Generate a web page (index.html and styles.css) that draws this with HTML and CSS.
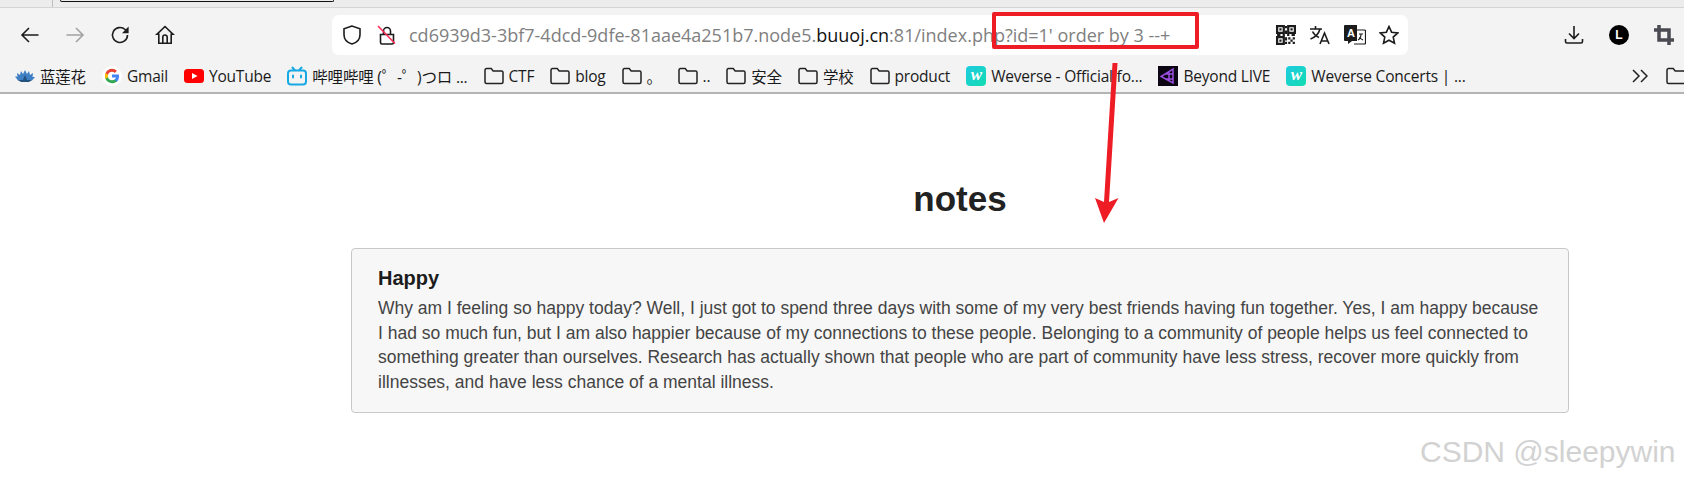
FILE: index.html
```html
<!DOCTYPE html>
<html lang="en">
<head>
    <meta charset="UTF-8">
    <meta name="viewport" content="width=device-width, initial-scale=1.0">
    <title>notes</title>
    <link rel="stylesheet" href="styles.css">
</head>
<body>
    <div class="tabstrip">
        <div class="tab-gap"></div>
        <div class="tab"></div>
    </div>

    <div class="toolbar">
        <div class="nav">
            <svg class="ic" viewBox="0 0 20 20"><path d="M18.500 10H2M9 3l-7 7 7 7"/></svg>
            <svg class="ic faded" viewBox="0 0 20 20"><path d="M1.500 10H18M11 3l7 7-7 7"/></svg>
            <svg class="ic" viewBox="0 0 20 20"><path d="M17.500 10a7.500 7.500 0 1 1-2.400-5.500L17.500 7"/><path class="solid" d="M18.600 1.600v6.600h-6.600z"/></svg>
            <svg class="ic" viewBox="0 0 20 20"><path d="M10 1.500 1.800 9.300h2v8.900h12.400V9.300h2zM7.800 18.200v-6a2.200 2.200 0 0 1 4.400 0v6"/></svg>
        </div>
        <div class="address">
            <svg class="ic" viewBox="0 0 20 20"><path d="M10 1 2 3.700v6c0 4.500 3.400 7.900 8 9.300 4.600-1.400 8-4.800 8-9.300v-6z"/></svg>
            <svg class="ic lock" viewBox="0 0 20 20"><path d="M6.500 9V6a3.500 3.500 0 0 1 7 0v3M3.500 9.500h13v8a1.500 1.500 0 0 1-1.500 1.500H5a1.500 1.500 0 0 1-1.500-1.500z"/><path class="slash" d="M1 1l17 17.500"/></svg>
            <div class="url">cd6939d3-3bf7-4dcd-9dfe-81aae4a251b7.node5.<b>buuoj.cn</b>:81/index.php?id=1' order by 3 --+</div>
            <div class="addr-tools">
                <svg class="ic qr" viewBox="0 0 18 18"><path d="M1 1h6v6H1zM11 1h6v6h-6zM1 11h6v6H1z"/><path class="solid" d="M3 3h2v2H3zM13 3h2v2h-2zM3 13h2v2H3zM8 1h2v2H8zM8 5h2v3H8zM1 8h3v2H1zM6 8h2v2H6zM10 8h2v2h-2zM14 8h3v2h-3zM8 11h2v3H8zM11 11h2v2h-2zM15 11h2v2h-2zM11 15h2v2h-2zM15 15h2v2h-2zM13 13h2v2h-2zM8 15h2v2H8z"/></svg>
                <svg class="ic wide" viewBox="0 0 22 20"><path d="M1 4h12M6.500 1v3M11 4C9.800 8.500 6.500 12 1.500 14M3.500 6.500C5 9.500 7.500 11.500 10 12.500M11 19l4.500-11L20 19M12.500 16h6"/></svg>
                <svg class="ic wide" viewBox="0 0 22 20"><path class="dark" d="M0 1a1 1 0 0 1 1-1h12v16H8l-4 3v-3H1a1 1 0 0 1-1-1z"/><path class="thin" d="M13 5h7.500a1 1 0 0 1 1 1v12a1 1 0 0 1-1 1H10M15 9h4M17 9c0 3-1 5-3 6M15.500 12c.8 1.500 2 2.500 3.500 3"/><text class="glyph-a" x="3" y="12">A</text></svg>
                <svg class="ic" viewBox="0 0 20 20"><path d="M10 1.500l2.600 5.700 6.200.7-4.600 4.200 1.300 6.100L10 15.200l-5.500 3 1.300-6.100L1.200 7.900l6.200-.7z"/></svg>
            </div>
        </div>
        <div class="right-tools">
            <svg class="ic" viewBox="0 0 20 20"><path d="M10 1v12M5 8.500l5 5 5-5M1.500 14v2.500a1.500 1.500 0 0 0 1.500 1.500h14a1.500 1.500 0 0 0 1.500-1.500V14"/></svg>
            <div class="avatar">L</div>
            <svg class="ic crop" viewBox="0 0 20 20"><path d="M5 0v15h15M0 5h15v15"/></svg>
        </div>
    </div>

    <div class="bookmarks">
        <div class="bm">
            <svg class="fav" viewBox="0 0 20 20"><path class="lotus" d="M10 4l2 4 2-3 1 4 3-2-.5 4 2.500 0-3 3.500H3L0 10.500h2.500L2 7l3 2 1-4 2 3z"/><path class="lotus-dark" d="M3 14h14l-3 2H6zM10 9l2 5H8z"/></svg>
            <span>蓝莲花</span>
        </div>
        <div class="bm">
            <svg class="fav" viewBox="0 0 20 20"><circle class="fav-bg" cx="10" cy="10" r="10"/><path fill="#4285f4" d="M17 10.200c0-.6-.1-1.100-.2-1.600H10v3h3.900c-.2.900-.7 1.700-1.500 2.200v1.900h2.400c1.400-1.300 2.200-3.200 2.200-5.500z"/><path fill="#34a853" d="M10 17.200c2 0 3.600-.7 4.800-1.800l-2.400-1.900c-.6.400-1.400.7-2.400.7-1.900 0-3.500-1.300-4-3H3.500v1.900c1.200 2.400 3.700 4.100 6.500 4.100z"/><path fill="#fbbc05" d="M6 11.200c-.3-.8-.3-1.600 0-2.400V6.900H3.500c-.8 1.600-.8 4.600 0 6.200z"/><path fill="#ea4335" d="M10 5.800c1.100 0 2 .4 2.800 1.100l2.100-2.100C13.600 3.600 12 2.800 10 2.800c-2.800 0-5.300 1.700-6.500 4.100L6 8.800c.5-1.700 2.100-3 4-3z"/></svg>
            <span>Gmail</span>
        </div>
        <div class="bm">
            <svg class="fav" viewBox="0 0 20 20"><rect y="3" width="20" height="14" rx="3.500" fill="#f00"/><path fill="#fff" d="M8 7l5.500 3L8 13z"/></svg>
            <span>YouTube</span>
        </div>
        <div class="bm">
            <svg class="fav bili" viewBox="0 0 20 20"><path d="M5 1l3 3.500M15 1l-3 3.500"/><rect x="1" y="4.500" width="18" height="14" rx="3"/><path class="bili-eye" d="M6 9.500v2M14 9.500v2"/></svg>
            <span>哔哩哔哩 (゜-゜)つロ ...</span>
        </div>
        <div class="bm"><svg class="folder" viewBox="0 0 20 18"><path d="M1 3a1.500 1.500 0 0 1 1.500-1.500h4.700l2 2.500h8.300A1.500 1.500 0 0 1 19 5.500V15a1.500 1.500 0 0 1-1.500 1.500h-15A1.500 1.500 0 0 1 1 15z"/></svg><span>CTF</span></div>
        <div class="bm"><svg class="folder" viewBox="0 0 20 18"><path d="M1 3a1.500 1.500 0 0 1 1.500-1.500h4.700l2 2.500h8.300A1.500 1.500 0 0 1 19 5.500V15a1.500 1.500 0 0 1-1.500 1.500h-15A1.500 1.500 0 0 1 1 15z"/></svg><span>blog</span></div>
        <div class="bm"><svg class="folder" viewBox="0 0 20 18"><path d="M1 3a1.500 1.500 0 0 1 1.500-1.500h4.700l2 2.500h8.300A1.500 1.500 0 0 1 19 5.500V15a1.500 1.500 0 0 1-1.500 1.500h-15A1.500 1.500 0 0 1 1 15z"/></svg><span class="dot-name">。</span></div>
        <div class="bm"><svg class="folder" viewBox="0 0 20 18"><path d="M1 3a1.500 1.500 0 0 1 1.500-1.500h4.700l2 2.500h8.300A1.500 1.500 0 0 1 19 5.500V15a1.500 1.500 0 0 1-1.500 1.500h-15A1.500 1.500 0 0 1 1 15z"/></svg><span>..</span></div>
        <div class="bm"><svg class="folder" viewBox="0 0 20 18"><path d="M1 3a1.500 1.500 0 0 1 1.500-1.500h4.700l2 2.500h8.300A1.500 1.500 0 0 1 19 5.500V15a1.500 1.500 0 0 1-1.500 1.500h-15A1.500 1.500 0 0 1 1 15z"/></svg><span>安全</span></div>
        <div class="bm"><svg class="folder" viewBox="0 0 20 18"><path d="M1 3a1.500 1.500 0 0 1 1.500-1.500h4.700l2 2.500h8.300A1.500 1.500 0 0 1 19 5.500V15a1.500 1.500 0 0 1-1.500 1.500h-15A1.500 1.500 0 0 1 1 15z"/></svg><span>学校</span></div>
        <div class="bm"><svg class="folder" viewBox="0 0 20 18"><path d="M1 3a1.500 1.500 0 0 1 1.500-1.500h4.700l2 2.500h8.300A1.500 1.500 0 0 1 19 5.500V15a1.500 1.500 0 0 1-1.500 1.500h-15A1.500 1.500 0 0 1 1 15z"/></svg><span>product</span></div>
        <div class="bm"><div class="wv">w</div><span>Weverse - Official fo...</span></div>
        <div class="bm">
            <svg class="fav" viewBox="0 0 20 20"><rect width="20" height="20" fill="#0c0614"/><path fill="none" stroke="#9a4fe0" stroke-width="1.500" d="M15 3v14L3 10.500zM11 6v9M15 8H7M15 13H7"/></svg>
            <span>Beyond LIVE</span>
        </div>
        <div class="bm"><div class="wv">w</div><span>Weverse Concerts | ...</span></div>
        <div class="bm-end">
            <svg class="chev" viewBox="0 0 16 14"><path d="M1 1l6 6-6 6M9 1l6 6-6 6"/></svg>
            <svg class="folder" viewBox="0 0 20 18"><path d="M1 3a1.500 1.500 0 0 1 1.500-1.500h4.700l2 2.500h8.300A1.500 1.500 0 0 1 19 5.500V15a1.500 1.500 0 0 1-1.500 1.500h-15A1.500 1.500 0 0 1 1 15z"/></svg>
        </div>
    </div>

    <div class="page">
        <h1>notes</h1>
        <div class="note">
            <h4>Happy</h4>
            <p>Why am I feeling so happy today? Well, I just got to spend three days with some of my very best friends having fun together. Yes, I am happy because I had so much fun, but I am also happier because of my connections to these people. Belonging to a community of people helps us feel connected to something greater than ourselves. Research has actually shown that people who are part of community have less stress, recover more quickly from illnesses, and have less chance of a mental illness.</p>
        </div>
    </div>

    <!-- screenshot annotations -->
    <div class="red-box"></div>
    <svg class="red-arrow" viewBox="0 0 35 165"><path d="M22.500 3h5L19 142l9.500-4L14 163 5 138l9 4z"/></svg>
    <div class="watermark">CSDN @sleepywin</div>
</body>
</html>
```

FILE: styles.css
```css
*{
    box-sizing:border-box;
}

body{
    margin:0;
    background:white;
    font-family:"Liberation Sans",Arial,sans-serif;
    height:481px;
    overflow:hidden;
}

.tabstrip
{
    height:8px;
    background:#ececec;
    border-bottom:1px solid #d4d4d4;
    display:flex;
}
.tab-gap
{
    width:53px;
    height:7px;
    border-right:1px solid #bdbdbd;
}
.tab
{
    width:274px;
    height:2px;
    margin-left:7px;
    border:1px solid #111;
    border-top:0;
    border-radius:0 0 3px 3px;
}

.ic
{
    width:20px;
    height:20px;
    fill:none;
    stroke:#1c1c1c;
    stroke-width:1.6;
    flex:none;
}
.ic.wide{
    width:22px;
}
.ic .solid{
    fill:#1c1c1c;
    stroke:none;
}
.ic.faded{
    stroke:#a3a3a3;
}

.toolbar
{
    height:48px;
    background:#f3f3f3;
    display:flex;
    align-items:center;
    padding:5px 10px 0 20px;
}
.nav
{
    width:312px;
    display:flex;
    gap:25px;
}

.address
{
    width:1076px;
    height:40px;
    background:white;
    border-radius:7px;
    display:flex;
    align-items:center;
    padding:0 9px 0 10px;
}
.lock{
    margin-left:15px;
}
.lock .slash{
    stroke:#ff2d55;
}
.url
{
    margin-left:12px;
    font-family:"Open Sans",sans-serif;
    font-size:18px;
    color:#7f7f7f;
    white-space:nowrap;
}
.url b{
    color:#111;
    font-weight:400;
}
.addr-tools
{
    margin-left:auto;
    display:flex;
    gap:13px;
}
.ic.qr{
    stroke-width:2;
}
.ic .dark{
    fill:#1c1c1c;
    stroke:none;
}
.ic .thin{
    stroke-width:1.200;
}
.glyph-a
{
    fill:white;
    stroke:none;
    font-size:11px;
    font-weight:700;
}

.right-tools
{
    margin-left:auto;
    display:flex;
    align-items:center;
    gap:25px;
}
.avatar
{
    width:20px;
    height:20px;
    border-radius:50%;
    background:black;
    color:white;
    font-size:12px;
    font-weight:700;
    text-align:center;
    line-height:20px;
}
.ic.crop{
    stroke:#4a4a52;
    stroke-width:3.500;
}

.bookmarks
{
    height:38px;
    background:#f3f3f3;
    border-bottom:2px solid #b4b4b4;
    display:flex;
    align-items:center;
    gap:16px;
    padding:4px 0 0 15px;
    font-family:"Open Sans","Noto Sans CJK SC",sans-serif;
    font-size:15.500px;
    letter-spacing:-0.2px;
    color:#1a1a1a;
    white-space:nowrap;
    overflow:hidden;
}
.bm
{
    display:flex;
    align-items:center;
    gap:5px;
    flex:none;
}
.fav
{
    width:20px;
    height:20px;
    flex:none;
}
.fav-bg{
    fill:white;
}
.lotus{
    fill:#3f7fc4;
}
.lotus-dark{
    fill:#22507f;
}
.bili
{
    fill:none;
    stroke:#17a9e3;
    stroke-width:2;
}
.bili-eye{
    stroke-linecap:round;
}
.folder
{
    width:20px;
    height:18px;
    fill:none;
    stroke:#222;
    stroke-width:1.500;
    flex:none;
}
.dot-name{
    width:15px;
}
.wv
{
    width:20px;
    height:20px;
    border-radius:4px;
    background:linear-gradient(135deg,#1ecbe1,#12dcb0);
    color:white;
    font-family:"Liberation Serif",serif;
    font-style:italic;
    font-weight:700;
    font-size:17px;
    line-height:17px;
    text-align:center;
    flex:none;
}
.bm-end
{
    margin-left:auto;
    display:flex;
    align-items:center;
    gap:18px;
    margin-right:-2px;
}
.chev
{
    width:16px;
    height:14px;
    fill:none;
    stroke:#222;
    stroke-width:1.500;
}

.page
{
    width:1218px;
    margin-left:351px;
}
.page h1
{
    font-size:35px;
    font-weight:700;
    line-height:40px;
    margin:0;
    padding-top:85px;
    height:154px;
    text-align:center;
    color:#222;
}
.note
{
    height:165px;
    background:#f7f7f7;
    border:1px solid #c8c8c8;
    border-radius:4px;
    padding:18px 26px;
}
.note h4
{
    margin:0;
    font-size:20px;
    line-height:22px;
    font-weight:700;
    color:#1c1c1c;
}
.note p
{
    margin:7px 0 0;
    font-size:17.500px;
    line-height:24.600px;
    color:#444;
}

.red-box
{
    position:absolute;
    left:992px;
    top:12px;
    width:207px;
    height:37px;
    border:4px solid #ee1c25;
    border-radius:2px;
}
.red-arrow
{
    position:absolute;
    left:1090px;
    top:60px;
    width:35px;
    height:165px;
    fill:#ee1c25;
}
.watermark
{
    position:absolute;
    left:1420px;
    top:434px;
    font-size:30px;
    line-height:36px;
    color:#d2d2d2;
    white-space:nowrap;
}
```
